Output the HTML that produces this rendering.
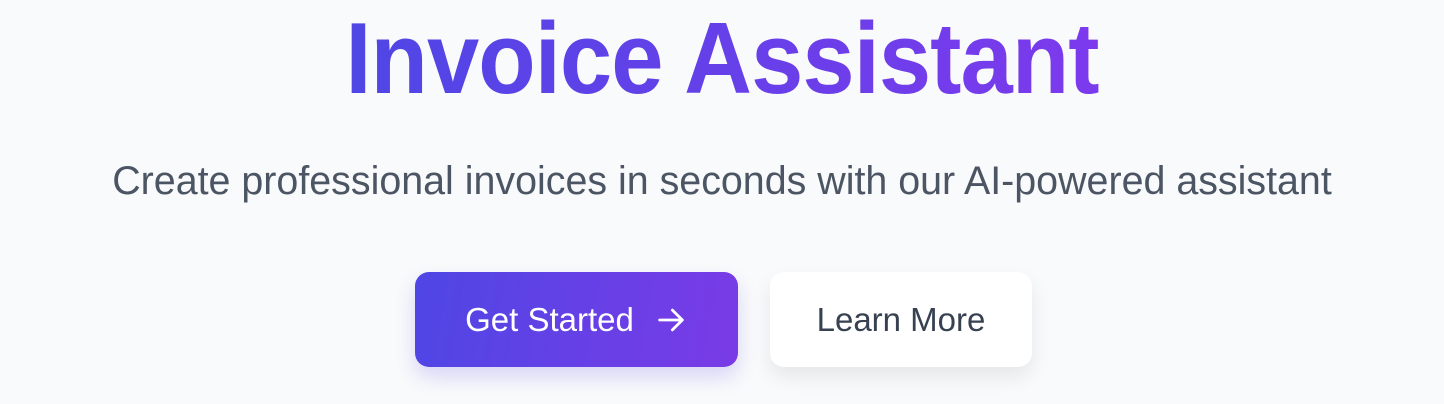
<!DOCTYPE html>
<html><head><style>
html,body{margin:0;padding:0;width:1444px;height:404px;background:#f9fafb;overflow:hidden;font-family:"Liberation Sans",Arial,sans-serif;}
h1{position:absolute;left:0;width:1444px;top:4px;margin:0;text-align:center;font-size:101px;font-weight:bold;line-height:110px;letter-spacing:-1px;transform:scaleX(0.93);}
h1 span{background:linear-gradient(90deg,#4f46e5,#7c3aed);-webkit-background-clip:text;background-clip:text;color:transparent;}
p{position:absolute;left:0;width:1444px;top:158px;margin:0;text-align:center;font-size:39.4px;line-height:46px;color:#4b5563;}
.b{position:absolute;top:272px;height:95px;border-radius:14px;display:flex;align-items:center;justify-content:center;font-size:33px;box-sizing:border-box;}
.g{left:415px;width:323px;background:linear-gradient(100deg,#4f46e5,#7a3be6);color:#fff;box-shadow:0 10px 20px rgba(79,70,229,0.2);}
.w{left:770px;width:262px;background:#fff;color:#374151;box-shadow:0 10px 20px rgba(0,0,0,0.08);}
</style></head><body>
<h1><span>Invoice Assistant</span></h1>
<p>Create professional invoices in seconds with our AI-powered assistant</p>
<div class="b g">Get Started<svg style="margin-left:20px" width="34" height="34" viewBox="0 0 24 24" fill="none" stroke="#fff" stroke-width="2" stroke-linecap="round" stroke-linejoin="round"><path d="M4 12h16M13 5l7 7-7 7"/></svg></div>
<div class="b w">Learn More</div>
</body></html>
